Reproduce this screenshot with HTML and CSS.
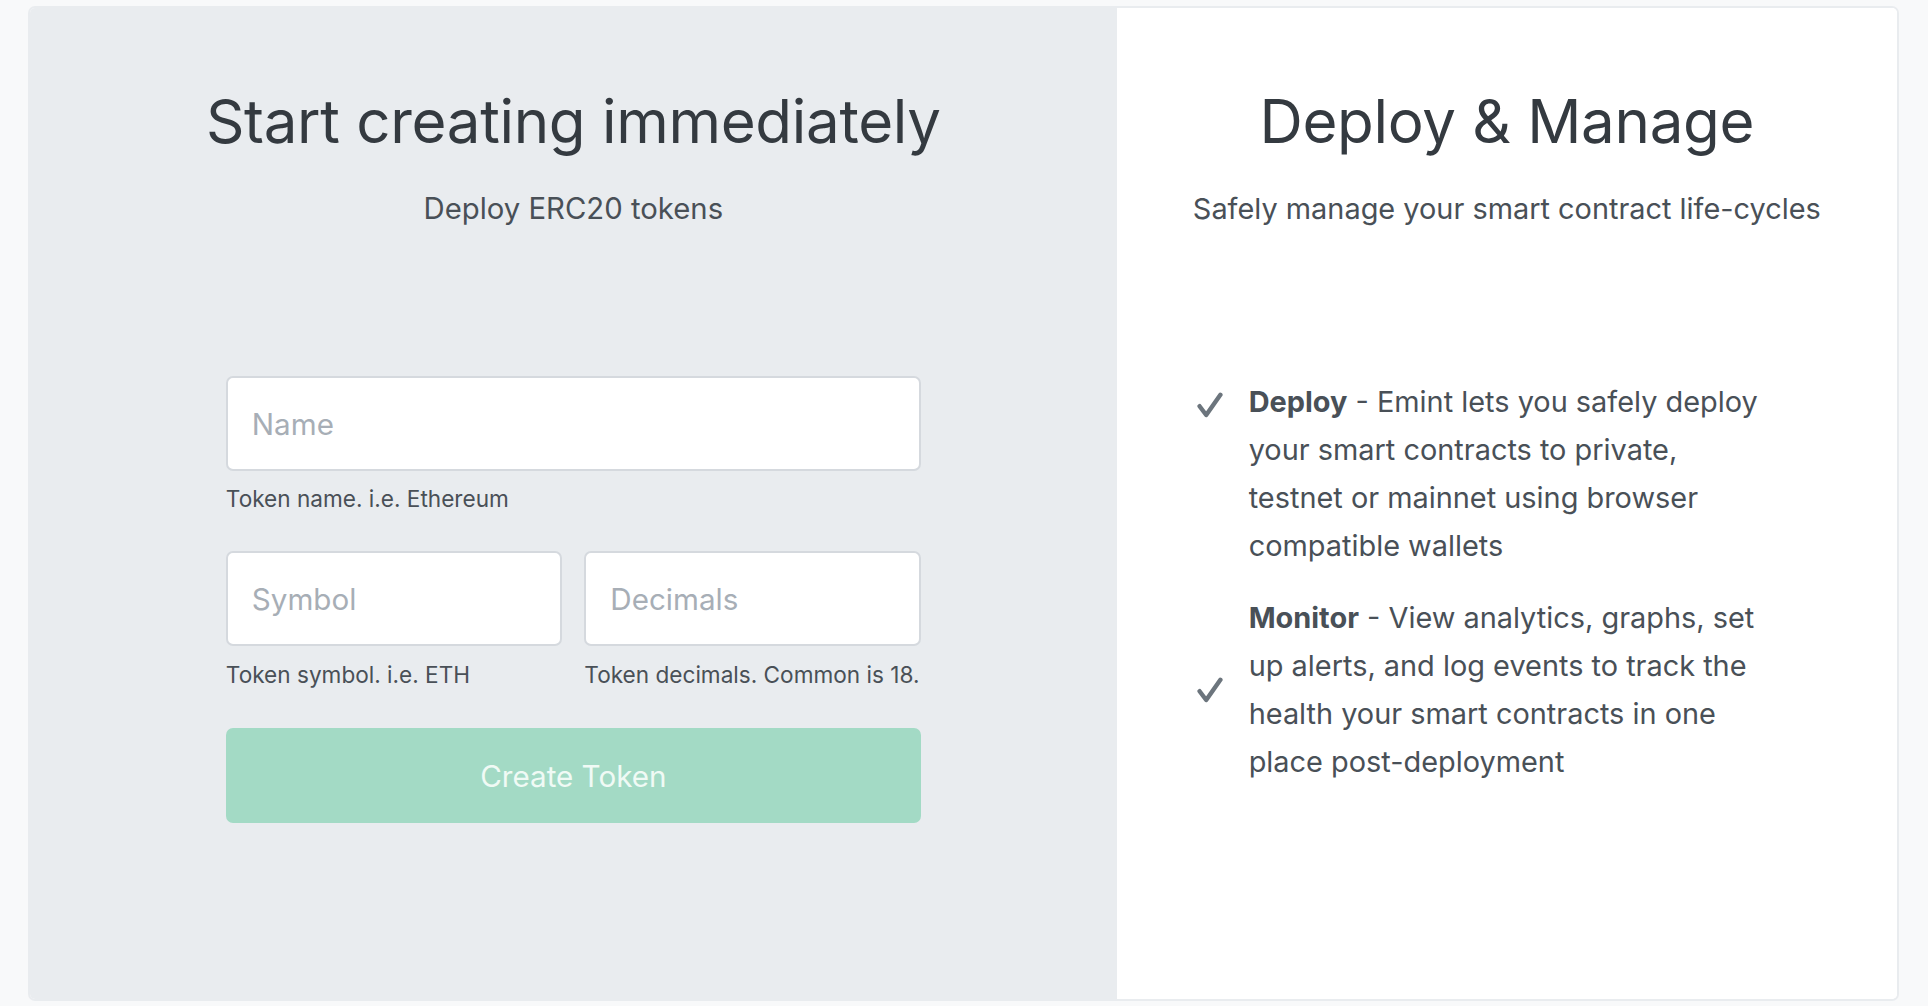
FILE: index.html
```html
<!DOCTYPE html>
<html lang="en">
<head>
<meta charset="utf-8">
<title>Emint</title>
<link rel="stylesheet" href="styles.css">
</head>
<body>
<div class="card">
  <section class="panel panel-create">
    <h1 class="title">Start creating immediately</h1>
    <p class="lead">Deploy ERC20 tokens</p>
    <form class="token-form">
      <div class="field">
        <input class="input" type="text" placeholder="Name">
        <small class="help">Token name. i.e. Ethereum</small>
      </div>
      <div class="field-row">
        <div class="field">
          <input class="input" type="text" placeholder="Symbol">
          <small class="help">Token symbol. i.e. ETH</small>
        </div>
        <div class="field">
          <input class="input" type="text" placeholder="Decimals">
          <small class="help">Token decimals. Common is 18.</small>
        </div>
      </div>
      <button class="btn" type="button" disabled>Create Token</button>
    </form>
  </section>
  <section class="panel panel-manage">
    <h1 class="title">Deploy &amp; Manage</h1>
    <p class="lead lead-narrow">Safely manage your smart contract life-cycles</p>
    <ul class="features">
      <li class="feature feature-top">
        <svg class="check" viewBox="0 0 26 26" aria-hidden="true"><polyline points="2.6,14.2 9.2,23 23.4,2.8"/></svg>
        <p class="feature-text"><strong>Deploy</strong> - Emint lets you safely deploy your smart contracts to private, testnet or mainnet using browser compatible wallets</p>
      </li>
      <li class="feature feature-center">
        <svg class="check" viewBox="0 0 26 26" aria-hidden="true"><polyline points="2.6,14.2 9.2,23 23.4,2.8"/></svg>
        <p class="feature-text"><strong>Monitor</strong> - View analytics, graphs, set up alerts, and log events to track the health your smart contracts in one place post-deployment</p>
      </li>
    </ul>
  </section>
</div>
</body>
</html>
```

FILE: styles.css
```css
* {
  box-sizing: border-box;
}

html, body {
  margin: 0;
  padding: 0;
  height: 100%;
}

body {
  background: #f8f9fa;
  font-family: Inter, "Noto Sans", "Liberation Sans", sans-serif;
  color: #343a40;
  padding: 6px 29px 5px 28px;
}

.card {
  display: grid;
  grid-template-columns: 1089fr 782fr;
  height: 995px;
  background: #ffffff;
  border: 2px solid #e9ecef;
  border-radius: 7px;
  overflow: hidden;
}

.panel {
  display: flex;
  flex-direction: column;
  align-items: center;
  padding-top: 77px;
}

.panel-create {
  background: #e9ecef;
}

.panel-manage {
  background: #ffffff;
}

.title {
  margin: 0;
  font-size: 60px;
  line-height: 72px;
  font-weight: 400;
  color: #343a40;
  letter-spacing: -0.3px;
}

.lead {
  margin: 31px 0 0;
  font-size: 29.3px;
  line-height: 42px;
  font-weight: 400;
  color: #495057;
}

.lead-narrow {
  font-size: 28.9px;
}

.token-form {
  margin-top: 146px;
  width: 695px;
  display: flex;
  flex-direction: column;
}

.field {
  display: flex;
  flex-direction: column;
  flex: 1;
  min-width: 0;
}

.field-row {
  display: flex;
  gap: 22px;
  margin-top: 36px;
}

.input {
  height: 95px;
  width: 100%;
  border: 2px solid #d5d9de;
  border-radius: 7px;
  background: #ffffff;
  padding: 0 24px;
  font-family: inherit;
  font-size: 29.6px;
  color: #495057;
  outline: none;
}

.input::placeholder {
  color: #a7aeb6;
}

.help {
  margin-top: 11px;
  font-size: 22.6px;
  line-height: 33px;
  color: #495057;
}

.field-row .help {
  margin-top: 12px;
}

.btn {
  margin-top: 37px;
  height: 95px;
  width: 100%;
  border: 0;
  border-radius: 7px;
  background: #a3dac5;
  color: #f0faf5;
  font-family: inherit;
  font-size: 29.6px;
  font-weight: 400;
}

.features {
  list-style: none;
  margin: 148px 0 0;
  padding: 0 0 0 80px;
  align-self: stretch;
}

.feature {
  display: flex;
  gap: 26px;
  margin-bottom: 24px;
}

.feature-top {
  align-items: flex-start;
}

.feature-center {
  align-items: center;
}

.check {
  width: 26px;
  height: 26px;
  flex: none;
  fill: none;
  stroke: #6c757d;
  stroke-width: 4.4;
  stroke-linecap: round;
  stroke-linejoin: round;
}

.feature-top .check {
  margin-top: 14px;
}

.feature-text {
  margin: 0;
  width: 525px;
  font-size: 28.9px;
  line-height: 48px;
  color: #495057;
}

.feature-text strong {
  font-weight: 700;
}
```
